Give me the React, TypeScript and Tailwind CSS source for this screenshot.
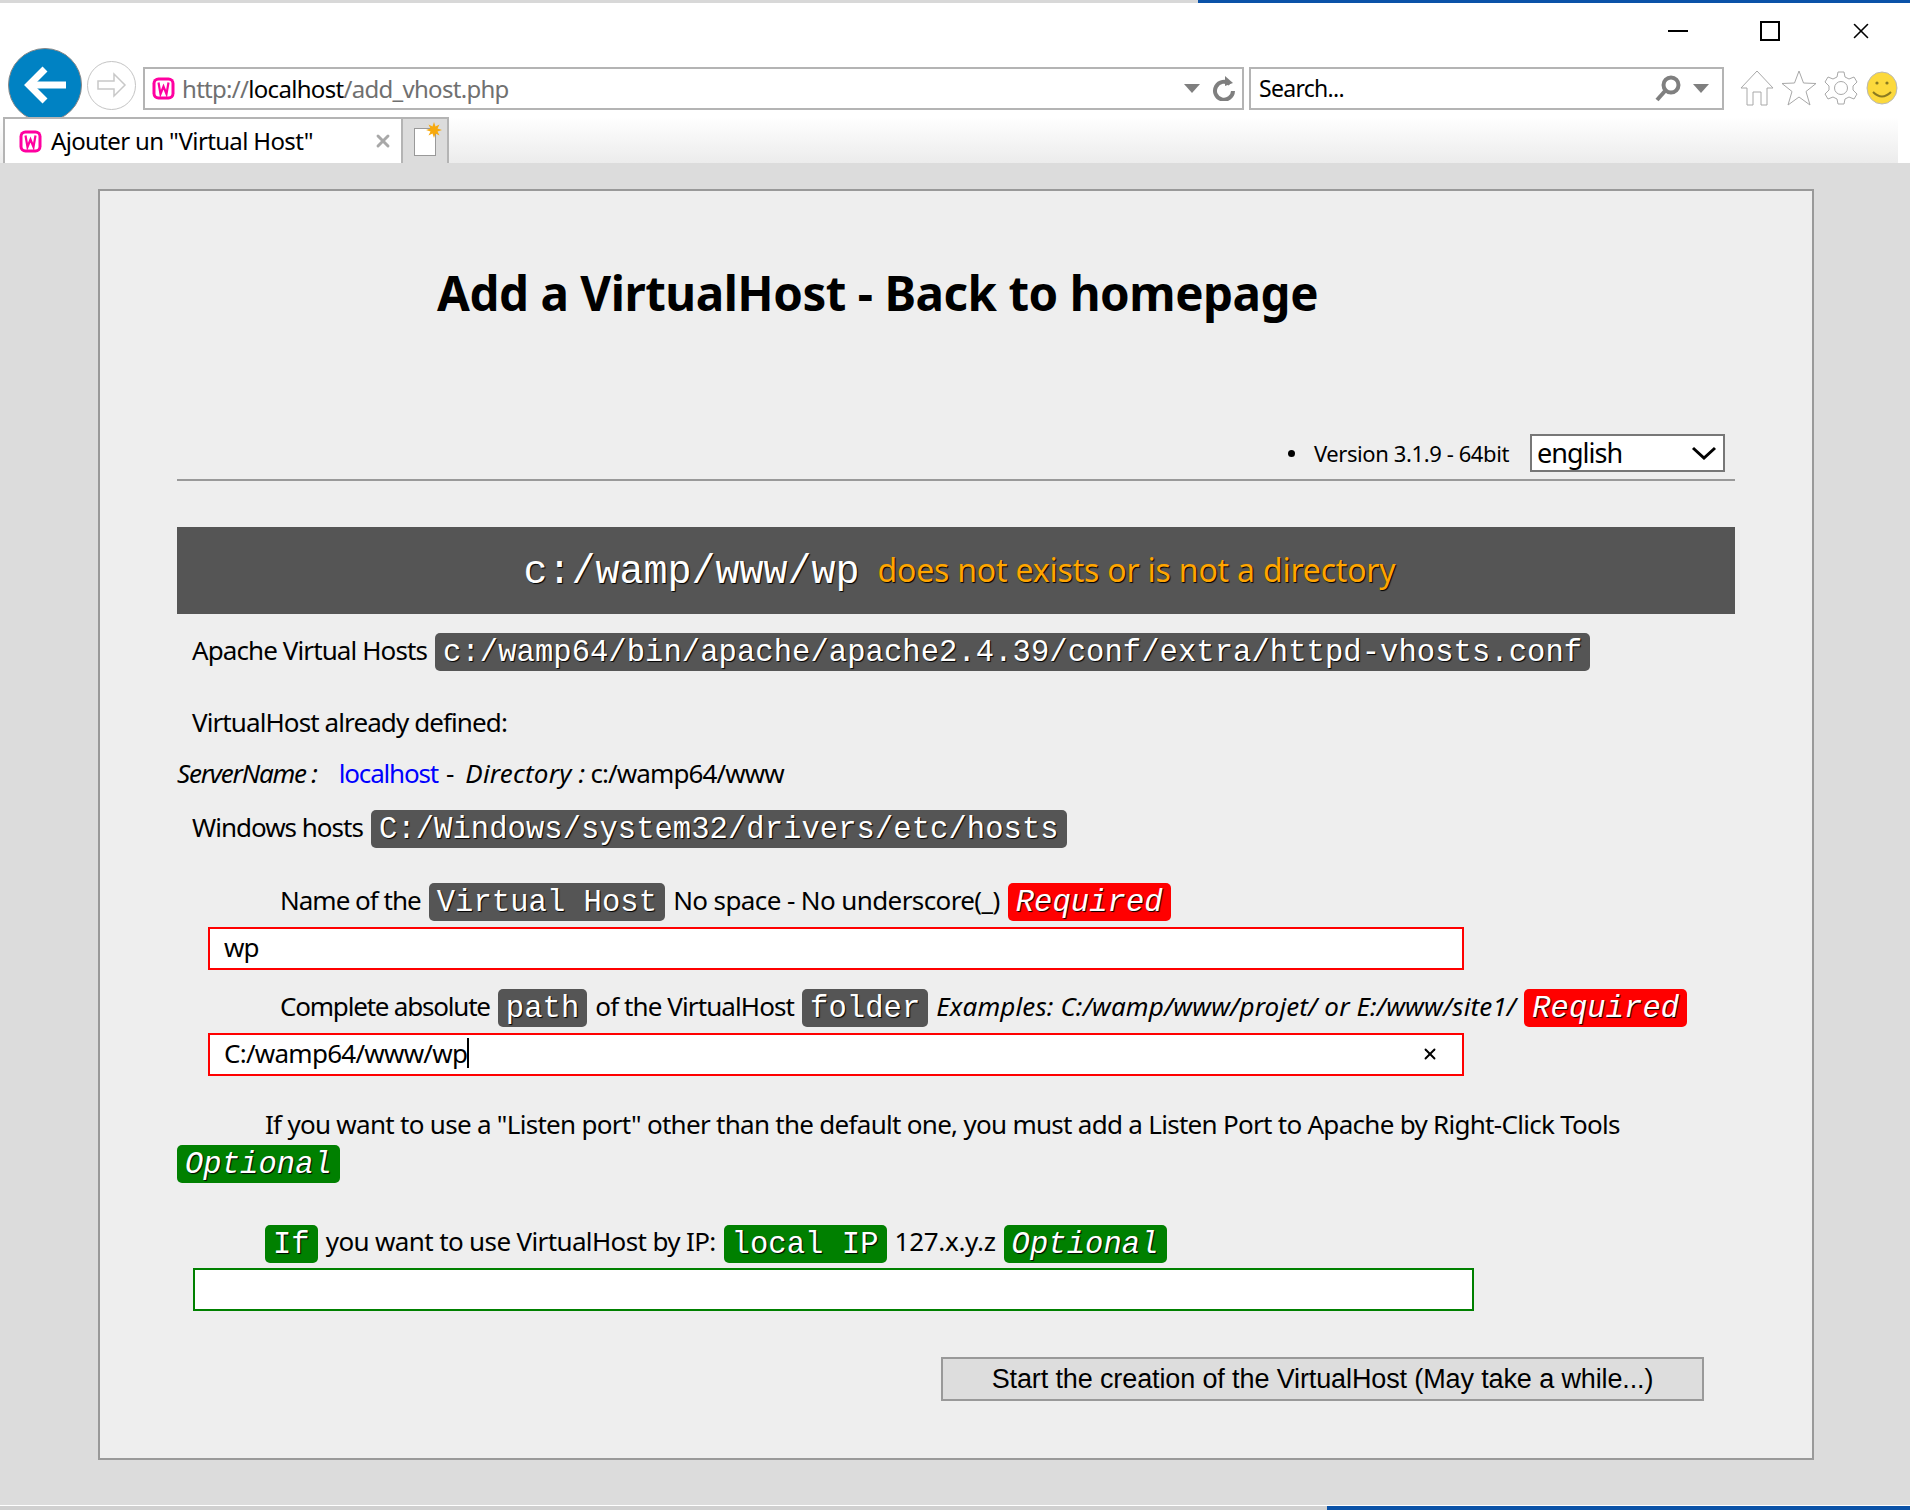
import { X } from "lucide-react";

const body = "[font-family:'Noto_Sans',sans-serif]";
const mono = "font-['Liberation_Mono',monospace] [text-shadow:1px_1px_1px_#000]";

function WampIcon() {
  return (
    <svg width="23" height="23" viewBox="0 0 23 23" className="shrink-0">
      <rect x="0.5" y="0.5" width="22" height="22" rx="6" fill="#ff00a0" />
      <rect x="3.5" y="3.5" width="16" height="16" rx="3" fill="#fff" />
      <path d="M6.5 5.5 L8.5 17 L11.5 9.5 L14.5 17 L16.5 5.5" fill="none" stroke="#ff00a0" strokeWidth="2.2" />
    </svg>
  );
}

function Caret() {
  return <span className="w-0 h-0 border-x-[8px] border-x-transparent border-t-[9px] border-t-[#7f7f7f]" />;
}

function Pill({ children, color = "bg-[#555]", italic = false }: { children: string; color?: string; italic?: boolean }) {
  return (
    <span className={`inline-block translate-y-[2px] rounded-[5px] px-[8px] h-[38px] leading-[40px] text-[30.5px] tracking-[0.07px] text-white whitespace-pre ${mono} ${color} ${italic ? "italic" : ""}`}>
      {children}
    </span>
  );
}

function BrowserChrome() {
  return (
    <div className="bg-white h-[163px] shrink-0 flex flex-col">
      <div className="h-[3px] flex shrink-0">
        <div className="w-[1198px] bg-[#d8d8d8]" />
        <div className="flex-1 bg-[#0a52a8]" />
      </div>
      <div className="h-[46px] pt-[10px] flex justify-end items-center shrink-0">
        <div className="w-[20px] h-[2px] bg-black" />
        <div className="w-[20px] h-[20px] border-2 border-black ml-[72px]" />
        <X size={26} strokeWidth={1.5} className="ml-[68px] mr-[36px] text-black" />
      </div>
      <div className="h-[68px] flex items-center shrink-0">
        <div className="w-[74px] h-[74px] mt-[4px] rounded-full bg-[#0082c3] border border-[#888] ml-[8px] flex items-center justify-center shrink-0">
          <svg width="44" height="40" viewBox="0 0 44 40" fill="none" stroke="#fff" strokeWidth="7">
            <path d="M22 4 L6 20 L22 36" />
            <path d="M6 20 H43" />
          </svg>
        </div>
        <div className="w-[49px] h-[49px] mt-[4px] rounded-full bg-white border border-[#c4c4c4] ml-[5px] flex items-center justify-center shrink-0">
          <svg width="30" height="26" viewBox="0 0 30 26" fill="none" stroke="#c8c8c8" strokeWidth="1.5">
            <path d="M1 9 H17 V2 L28 13 L17 24 V17 H1 Z" />
          </svg>
        </div>
        <div className={`w-[1101px] h-[43px] mt-[10px] border-2 border-[#b4b4b4] ml-[7px] flex items-center pl-[7px] pr-[6px] text-[24px] ${body} shrink-0`}>
          <WampIcon />
          <span className="ml-[7px] pt-[1px] text-[#707070] tracking-[-0.7px]">http://<span className="text-black">localhost</span>/add_vhost.php</span>
          <div className="flex-1" />
          <Caret />
          <svg width="24" height="26" viewBox="0 0 24 26" className="ml-[12px]" fill="none" stroke="#7f7f7f" strokeWidth="4">
            <path d="M18 9 A9 9 0 1 0 21 16" />
            <path d="M13 1 L21 8 L13 11 Z" fill="#7f7f7f" stroke="none" />
          </svg>
        </div>
        <div className={`w-[475px] h-[43px] mt-[10px] border-2 border-[#b4b4b4] ml-[5px] flex items-center pl-[8px] pr-[13px] text-[23px] text-black ${body} shrink-0`}>
          <span className="pt-[1px] tracking-[-0.7px]">Search...</span>
          <div className="flex-1" />
          <svg width="28" height="28" viewBox="0 0 28 28" fill="none" stroke="#7f7f7f" className="mr-[11px]">
            <circle cx="17" cy="11" r="7.5" strokeWidth="4" />
            <path d="M11 17 L3 26" strokeWidth="4" />
          </svg>
          <Caret />
        </div>
        <div className="flex items-center mt-[10px] ml-[15px] gap-[6px]">
          <svg width="36" height="38" viewBox="0 0 36 38" fill="#fff" stroke="#a8a8a8">
            <path d="M18 2 L34 19 L28 19 L28 36 L22 36 L22 23 L14 23 L14 36 L8 36 L8 19 L2 19 Z" />
          </svg>
          <svg width="36" height="38" viewBox="0 0 36 38" fill="#fff" stroke="#a8a8a8">
            <path d="M18 2 L22.5 14 L35 14.5 L25 22.5 L29 36 L18 28 L7 36 L11 22.5 L1 14.5 L13.5 14 Z" />
          </svg>
          <svg width="36" height="36" viewBox="0 0 36 36" fill="#fff" stroke="#a8a8a8">
            <path d="M15 2 H21 L22 7 L26 9 L31 7 L34 12 L30 16 V20 L34 24 L31 29 L26 27 L22 29 L21 34 H15 L14 29 L10 27 L5 29 L2 24 L6 20 V16 L2 12 L5 7 L10 9 L14 7 Z" />
            <circle cx="18" cy="18" r="6.5" />
          </svg>
          <svg width="32" height="36" viewBox="0 0 32 36" className="ml-[1px]">
            <ellipse cx="16" cy="18" rx="15" ry="16" fill="#fcd93c" stroke="#b8b8b8" />
            <circle cx="11" cy="13" r="1.6" fill="#8a7a20" />
            <circle cx="21" cy="13" r="1.6" fill="#8a7a20" />
            <path d="M7 22 Q16 31 25 22" fill="none" stroke="#8a7a20" strokeWidth="2" />
          </svg>
        </div>
      </div>
      <div className="relative z-10 flex-1 flex bg-gradient-to-b from-white to-[#ececec] mr-[12px]">
        <div className={`w-[400px] ml-[3px] border-2 border-b-0 border-[#b4b4b4] bg-white flex items-center pl-[14px] pr-[8px] text-[24px] text-black ${body}`}>
          <WampIcon />
          <span className="ml-[9px] tracking-[-0.65px]">Ajouter un "Virtual Host"</span>
          <div className="flex-1" />
          <X size={20} strokeWidth={3.5} className="text-[#a8a8a8]" />
        </div>
        <div className="w-[46px] bg-[#dcdcdc] border-y-2 border-r-2 border-[#b4b4b4] border-b-0 flex items-center justify-center">
          <div className="relative w-[22px] h-[28px] bg-white border border-[#999] mt-[2px]">
            <svg width="16" height="16" viewBox="0 0 16 16" className="absolute -top-[7px] -right-[7px]">
              <path d="M8 0 L9.5 4.5 L13.5 2.5 L11.5 6.5 L16 8 L11.5 9.5 L13.5 13.5 L9.5 11.5 L8 16 L6.5 11.5 L2.5 13.5 L4.5 9.5 L0 8 L4.5 6.5 L2.5 2.5 L6.5 4.5 Z" fill="#f7a90c" />
            </svg>
          </div>
        </div>
      </div>
    </div>
  );
}

export default function App() {
  return (
    <div className={`w-[1910px] h-[1510px] overflow-hidden bg-[#dcdcdc] flex flex-col text-black text-[26px] tracking-[-0.9px] ${body}`}>
      <BrowserChrome />
      <div className="flex-1 pt-[26px] pl-[98px]">
        <div className="h-[1271px] w-[1716px] border-2 border-[#999] bg-[#eee] pl-[77px] pr-[77px]">
          <h1 className="mt-[72px] h-[60px] pl-[260px] text-[47.5px] leading-[60px] font-bold tracking-[-0.47px] whitespace-nowrap">Add a VirtualHost - Back to homepage</h1>

          <div className="mt-[111px] h-[38px] flex items-center justify-end pr-[10px]">
            <span className="w-[7px] h-[7px] rounded-full bg-black" />
            <span className="ml-[19px] text-[22px] tracking-[-0.4px]">Version 3.1.9 - 64bit</span>
            <div className="ml-[21px] w-[195px] h-[38px] border-2 border-[#777] bg-white flex items-center pl-[5px] pr-[6px] text-[27px] tracking-[-1px]">
              english
              <svg width="26" height="14" viewBox="0 0 26 14" className="ml-auto" fill="none" stroke="#000" strokeWidth="3">
                <path d="M2 2 L13 12 L24 2" />
              </svg>
            </div>
          </div>
          <div className="mt-[7px] h-[2px] bg-[#999]" />

          <div className="mt-[46px] h-[87px] pl-[7px] pb-[2px] bg-[#555] flex items-center justify-center text-[32px] text-[#ffa500] tracking-[-0.2px]">
            <span className={`text-[40px] text-white tracking-normal translate-y-[3px] ${mono}`}>c:/wamp/www/wp</span>
            <span className="ml-[18px] [text-shadow:1px_1px_1px_#000]">does not exists or is not a directory</span>
          </div>

          <div className="mt-[18px] h-[38px] pl-[15px] pb-[2px] flex items-center gap-[8px]">
            Apache Virtual Hosts
            <Pill>c:/wamp64/bin/apache/apache2.4.39/conf/extra/httpd-vhosts.conf</Pill>
          </div>

          <div className="mt-[34px] h-[38px] pl-[15px] pb-[2px] flex items-center">VirtualHost already defined:</div>

          <div className="mt-[14px] h-[36px] pb-[1px] flex items-center whitespace-pre">
            <i className="tracking-[-1.2px]">ServerName :</i>
            <span className="ml-[22px] text-[#0000ff] tracking-[-1.2px]">localhost</span>
            <span className="ml-[8px]">-</span>
            <i className="ml-[12px] tracking-[0.2px]">Directory :</i>
            <span className="ml-[5px]">c:/wamp64/www</span>
          </div>

          <div className="mt-[17px] h-[38px] pl-[15px] pb-[2px] flex items-center gap-[8px]">
            <span className="tracking-[-1px]">Windows hosts</span>
            <Pill>C:/Windows/system32/drivers/etc/hosts</Pill>
          </div>

          <div className="mt-[35px] h-[38px] pl-[103px] pb-[2px] flex items-center gap-[8px] whitespace-pre">
            <span className="tracking-[-1px]">Name of the</span>
            <Pill>Virtual Host</Pill>
            <span className="tracking-[-0.6px]">No space - No underscore(_)</span>
            <Pill color="bg-[#ff0000]" italic>Required</Pill>
          </div>

          <div className="mt-[7px] ml-[31px] w-[1256px] h-[43px] border-2 border-[#ff0000] bg-white flex items-center pl-[14px] pb-[2px]">wp</div>

          <div className="mt-[18px] h-[38px] pl-[103px] flex items-center gap-[8px] whitespace-pre pb-[2px]">
            <span className="tracking-[-1.2px]">Complete absolute</span>
            <Pill>path</Pill>
            of the VirtualHost
            <Pill>folder</Pill>
            <i className="tracking-[0.13px]">Examples: C:/wamp/www/projet/ or E:/www/site1/</i>
            <Pill color="bg-[#ff0000]" italic>Required</Pill>
          </div>

          <div className="mt-[7px] ml-[31px] w-[1256px] h-[43px] border-2 border-[#ff0000] bg-white flex items-center pl-[14px] pr-[23px] pb-[3px] tracking-[-0.75px]">
            C:/wamp64/www/wp
            <span className="w-[2px] h-[30px] bg-black" />
            <X size={18} strokeWidth={2.5} className="ml-auto translate-y-[1px] text-black" />
          </div>

          <div className="mt-[32px] h-[36px] pl-[88px] pb-[4px] flex items-center tracking-[-0.71px] whitespace-pre">
            If you want to use a "Listen port" other than the default one, you must add a Listen Port to Apache by Right-Click Tools
          </div>
          <div className="h-[38px] pb-[2px] flex items-center">
            <Pill color="bg-[#008000]" italic>Optional</Pill>
          </div>

          <div className="mt-[42px] h-[38px] pl-[88px] pb-[3px] flex items-center gap-[8px] whitespace-pre">
            <Pill color="bg-[#008000]">If</Pill>
            <span className="tracking-[-0.63px]">you want to use VirtualHost by IP:</span>
            <Pill color="bg-[#008000]">local IP</Pill>
            <span className="tracking-[-0.3px]">127.x.y.z</span>
            <Pill color="bg-[#008000]" italic>Optional</Pill>
          </div>

          <div className="mt-[6px] ml-[16px] w-[1281px] h-[43px] border-2 border-[#008000] bg-white" />

          <div className="mt-[46px] ml-[764px] w-[763px] h-[44px] border-2 border-[#999] bg-[#ddd] flex items-center justify-center font-['Liberation_Sans',sans-serif] text-[27px] tracking-[-0.12px]">
            Start the creation of the VirtualHost (May take a while...)
          </div>
        </div>
      </div>
      <div className="h-[5px] flex shrink-0 border-t border-white">
        <div className="w-[1327px] bg-[#d0d0d0]" />
        <div className="flex-1 bg-[#0a52a8]" />
      </div>
    </div>
  );
}
